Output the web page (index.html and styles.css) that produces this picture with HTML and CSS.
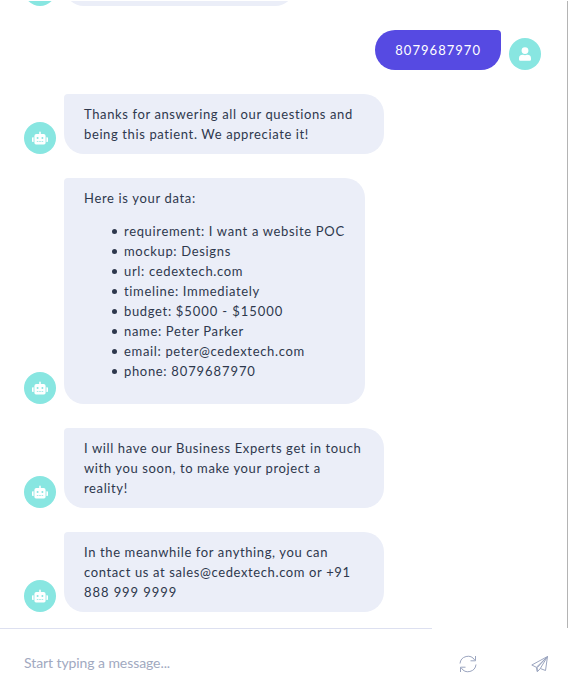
FILE: index.html
```html
<!DOCTYPE html>
<html lang="en">
<head>
<meta charset="utf-8">
<title>Chat</title>
<link rel="stylesheet" href="styles.css">
</head>
<body>
<svg class="defs" width="0" height="0" aria-hidden="true">
  <symbol id="robot" viewBox="0 0 640 512"><path fill="currentColor" d="M32 224h32v192H32a32 32 0 0 1-32-32V256a32 32 0 0 1 32-32zm512-48v272a64 64 0 0 1-64 64H160a64 64 0 0 1-64-64V176a80 80 0 0 1 80-80h112V32a32 32 0 0 1 64 0v64h112a80 80 0 0 1 80 80zM264 256a40 40 0 1 0-80 0 40 40 0 0 0 80 0zm-8 128h-64v32h64zm96 0h-64v32h64zm104-128a40 40 0 1 0-80 0 40 40 0 0 0 80 0zm-8 128h-64v32h64zm192-128v128a32 32 0 0 1-32 32h-32V224h32a32 32 0 0 1 32 32z"/></symbol>
</svg>
<main class="chat">
  <div class="row">
    <span class="avatar"></span>
    <div class="bubble bubble-earlier"></div>
  </div>
  <div class="row row-user">
    <div class="bubble bubble-user"><span class="num">8079687970</span></div>
    <span class="avatar"><svg width="12" height="14" viewBox="0 0 448 512"><path fill="currentColor" d="M224 256a128 128 0 1 0 0-256 128 128 0 0 0 0 256zm90 32h-17a174 174 0 0 1-146 0h-17A134 134 0 0 0 0 422v42a48 48 0 0 0 48 48h352a48 48 0 0 0 48-48v-42a134 134 0 0 0-134-134z"/></svg></span>
  </div>
  <div class="row">
    <span class="avatar"><svg width="16" height="14"><use href="#robot"/></svg></span>
    <div class="bubble">Thanks for answering all our questions and being this patient. We appreciate it!</div>
  </div>
  <div class="row">
    <span class="avatar"><svg width="16" height="14"><use href="#robot"/></svg></span>
    <div class="bubble bubble-data">Here is your data:
      <ul class="data">
        <li>requirement: I want a website POC</li>
        <li>mockup: Designs</li>
        <li>url: cedextech.com</li>
        <li>timeline: Immediately</li>
        <li>budget: <span class="amount">$5000 - $15000</span></li>
        <li>name: Peter Parker</li>
        <li>email: peter@cedextech.com</li>
        <li>phone: <span class="amount">8079687970</span></li>
      </ul>
    </div>
  </div>
  <div class="row">
    <span class="avatar"><svg width="16" height="14"><use href="#robot"/></svg></span>
    <div class="bubble">I will have our Business Experts get in touch with you soon, to make your project a reality!</div>
  </div>
  <div class="row">
    <span class="avatar"><svg width="16" height="14"><use href="#robot"/></svg></span>
    <div class="bubble">In the meanwhile for anything, you can contact us at sales@cedextech.com or +91 <span class="amount">888 999 9999</span></div>
  </div>
</main>
<footer class="composer">
  <div class="field">Start typing a message...</div>
  <div class="actions">
    <svg width="18" height="18" viewBox="0 0 18 18" fill="none" stroke="currentColor"><path d="M1 8.5A8 8 0 0 1 15.7 5M17 9.5A8 8 0 0 1 2.3 13M16.5 1v4.8h-5M1.5 17v-4.8h5"/></svg>
    <svg width="18" height="18" viewBox="0 0 18 18" fill="none" stroke="currentColor" stroke-linejoin="round"><path d="M16.5 1.5.8 10l4.6 2.3zM16.5 1.5l-2 14-5.2-2zM5.4 12.3l1 4.4 2.9-3.2M16.5 1.5 6.2 12.7v3.7"/></svg>
  </div>
</footer>
</body>
</html>
```
FILE: styles.css
```css
* { box-sizing: border-box; }
body {
  margin: 0;
  height: 699px;
  display: flex;
  flex-direction: column;
  overflow: hidden;
  background: #fff;
  color: #2e384d;
  font: 13px/20px Lato, sans-serif;
}
.defs { display: none; }
.chat {
  height: 627px;
  margin-top: 1px;
  padding: 0 26px 16px 24px;
  border-right: 1px solid #b4b4b4;
  display: flex;
  flex-direction: column;
  justify-content: flex-end;
  gap: 24px;
  overflow: hidden;
}
.row {
  display: flex;
  align-items: flex-end;
  gap: 8px;
  flex-shrink: 0;
}
.row-user { justify-content: flex-end; }
.avatar {
  width: 32px;
  height: 32px;
  flex: none;
  border-radius: 50%;
  background: #88e6e1;
  color: #fff;
  display: flex;
  align-items: center;
  justify-content: center;
}
.bubble {
  max-width: 320px;
  min-height: 40px;
  padding: 10px 20px;
  border-radius: 4px 20px 20px 20px;
  background: #ebeef8;
  letter-spacing: 0.62px;
}
.bubble-data { letter-spacing: 0.66px; }
.num { letter-spacing: 1.03px; }
.amount { letter-spacing: 0.92px; }
.bubble-user {
  border-radius: 20px 4px 20px 20px;
  background: #564ae2;
  color: #fff;
}
.bubble-earlier { width: 231px; }
.data {
  margin: 13px 0;
  padding-left: 40px;
  list-style: none;
}
.data li { position: relative; }
.data li::before {
  content: "";
  position: absolute;
  left: -12px;
  top: 8px;
  width: 5px;
  height: 5px;
  border-radius: 50%;
  background: #2e384d;
}
.composer {
  height: 71px;
  display: flex;
}
.field {
  width: 432px;
  border-top: 1px solid #dde0f0;
  padding: 24px;
  color: #a1a9bf;
  font-size: 14px;
  letter-spacing: -0.08px;
}
.actions {
  flex: 1;
  display: flex;
  justify-content: space-between;
  padding: 27px 19px 0 27px;
  color: #9ba5bf;
}
```
